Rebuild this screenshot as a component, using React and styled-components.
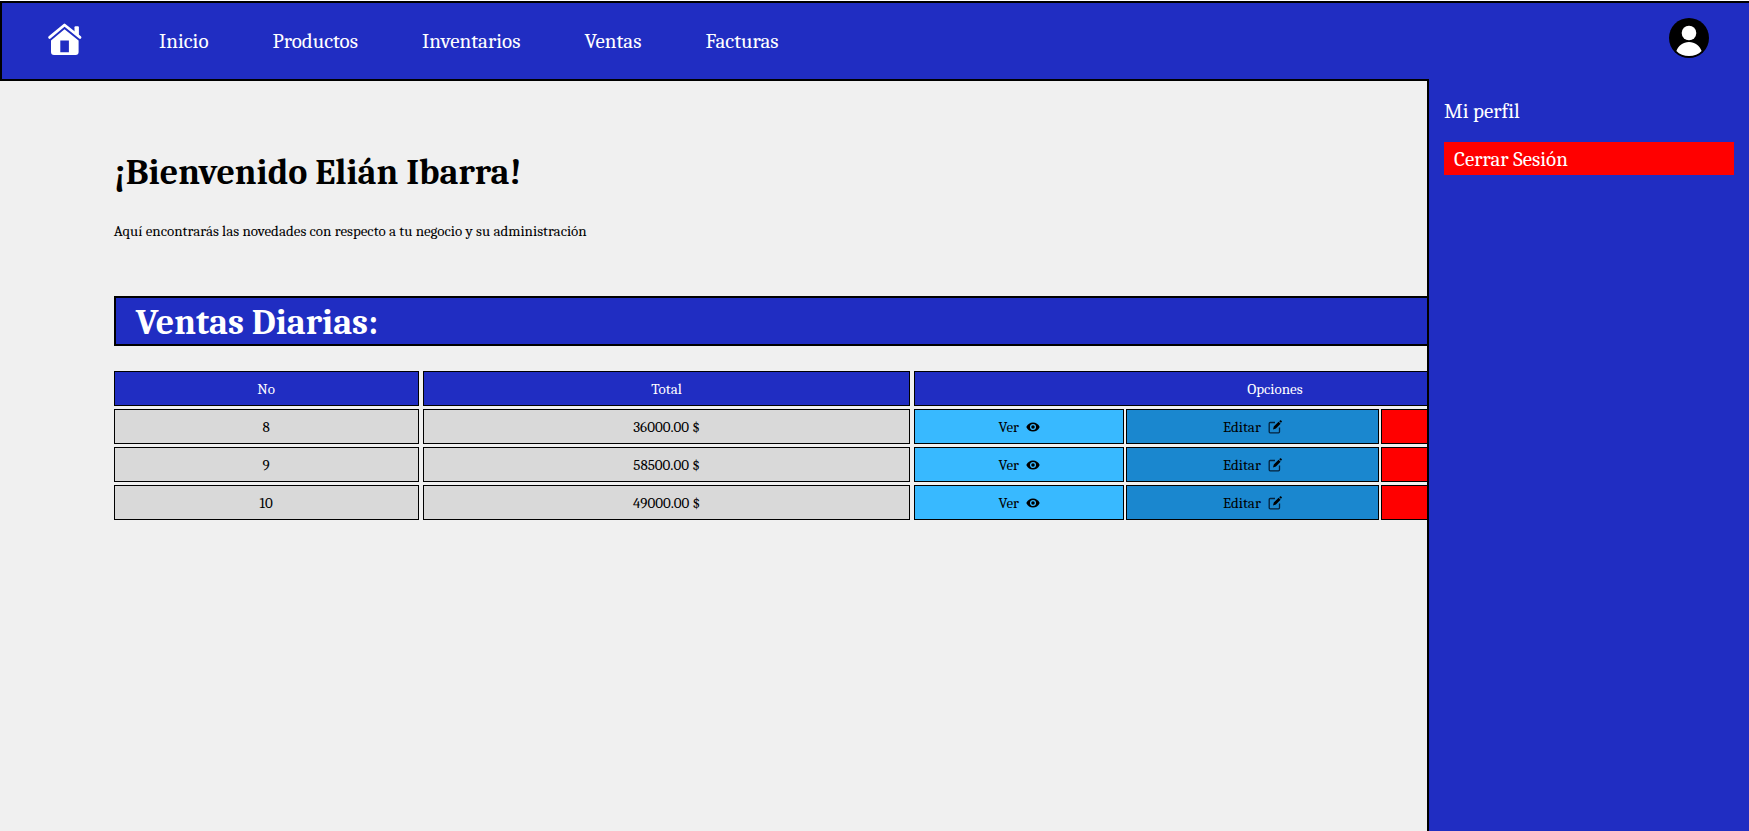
import React from "react";
import styled, { createGlobalStyle } from "styled-components";

const blue = "#202dc2";

const GlobalStyle = createGlobalStyle`
  *, *::before, *::after { box-sizing: border-box; }
  body {
    margin: 0;
    background: #f0f0f0;
    color: #000;
    font-family: Cambria, Caladea, "Liberation Serif", serif;
    font-size: 15px;
    line-height: 20px;
  }
  a { color: inherit; text-decoration: none; }
`;

const Page = styled.div`
  min-height: 100vh;
  border-top: 1px solid #fff;
  overflow-x: clip;
`;

const Header = styled.header`
  display: flex;
  align-items: center;
  height: 80px;
  padding: 0 40px 0 45px;
  background: ${blue};
  border: 2px solid #000;
  border-right: 0;
`;

const HomeLink = styled.a`
  display: flex;
  margin-right: 76px;
  margin-bottom: 4px;
`;

const Nav = styled.nav`
  display: flex;
  gap: 64px;
  flex: 1;
`;

const NavLink = styled.a`
  color: #fff;
  font-size: 21px;
  line-height: 24px;
`;

const AvatarButton = styled.button`
  display: flex;
  padding: 0;
  margin-bottom: 6px;
  border: 0;
  background: none;
  cursor: pointer;
`;

const ProfileMenu = styled.aside`
  position: fixed;
  top: 79px;
  right: 0;
  bottom: 0;
  width: 322px;
  padding: 20px 15px;
  display: flex;
  flex-direction: column;
  gap: 18px;
  background: ${blue};
  border-left: 2px solid #000;
  color: #fff;
  font-size: 21px;
  line-height: 25px;
`;

const LogoutButton = styled.button`
  padding: 5px 10px 3px;
  border: 0;
  background: #f00;
  color: #fff;
  font: inherit;
  text-align: left;
  cursor: pointer;
`;

const Main = styled.main`
  width: 87%;
  margin: 0 auto;
  padding-top: 70px;
`;

const Welcome = styled.h1`
  margin: 0;
  font-size: 36px;
  line-height: 44px;
`;

const Intro = styled.p`
  margin: 26px 0 55px;
`;

const SectionTitle = styled.h2`
  margin: 0 0 25px;
  padding: 4px 20px 0;
  background: ${blue};
  border: 2px solid #000;
  color: #fff;
  font-size: 36px;
  line-height: 42px;
`;

const Table = styled.table`
  display: block;
`;

const Section = styled.tbody`
  display: grid;
  gap: 3px;
`;

const Head = styled(Section).attrs({ as: "thead" })`
  margin-bottom: 3px;
`;

const Row = styled.tr`
  display: grid;
  grid-template-columns: 305fr 488fr 721fr;
  gap: 4px;
`;

const HeadCell = styled.th`
  padding: 7px 8px 6px;
  background: ${blue};
  border: 1px solid #000;
  color: #fff;
  font-weight: 400;
  text-align: center;
`;

const Cell = styled.td`
  padding: 7px 8px 6px;
  background: #d9d9d9;
  border: 1px solid #000;
  text-align: center;
`;

const Options = styled.td`
  display: grid;
  grid-template-columns: 210fr 253fr 255fr;
  gap: 2px;
  padding: 0;
`;

const tones = { view: "#38b9ff", edit: "#1a87cf", remove: "#f00" };

const OptionButton = styled.button`
  display: flex;
  align-items: center;
  justify-content: center;
  gap: 7px;
  padding: 0 8px;
  background: ${({ $tone }) => tones[$tone]};
  border: 1px solid #000;
  color: #000;
  font: inherit;
  cursor: pointer;
`;

const HomeIcon = () => (
  <svg width="36" height="34" viewBox="0 0 36 34" aria-hidden="true">
    <path d="M27.5 12V5.200a1 1 0 0 1 1-1h2.400a1 1 0 0 1 1 1V15z" fill="#fff" />
    <path d="M2.600 15.400 17.500 3 33 15.400" fill="none" stroke="#fff" strokeWidth="2.800" strokeLinecap="round" strokeLinejoin="round" />
    <path fillRule="evenodd" d="M17.500 7.200 31.600 18.600V30q0 3-3 3H7q-3 0-3-3V18.600zM13.300 18.400v11.800h8.600V18.400z" fill="#fff" />
  </svg>
);

const AvatarIcon = () => (
  <svg width="40" height="40" viewBox="0 0 40 40" aria-hidden="true">
    <circle cx="20" cy="20" r="20" fill="#000" />
    <circle cx="20" cy="15" r="7.300" fill="#fff" />
    <path d="M7.400 33C9.500 27.600 14 24 20 24s10.500 3.600 12.600 9c-3 3.500-7.600 5-12.600 5s-9.600-1.500-12.600-5z" fill="#fff" />
  </svg>
);

const EyeIcon = () => (
  <svg width="14" height="14" viewBox="0 0 14 14" aria-hidden="true">
    <path d="M.3 7C1.700 4 4 2.500 7 2.500S12.300 4 13.700 7C12.300 10 10 11.500 7 11.500S1.700 10 .3 7z" fill="#000" />
    <circle cx="7" cy="7" r="2.400" fill="#000" stroke="#38b9ff" strokeWidth="1.300" />
  </svg>
);

const EditIcon = () => (
  <svg width="14" height="14" viewBox="0 0 14 14" aria-hidden="true">
    <path d="M7 2.500H2.200q-1 0-1 1v8.300q0 1 1 1h8.300q1 0 1-1V7.500" fill="none" stroke="#04223c" strokeWidth="1.300" />
    <path d="m5 9.400.8-3L10.600 1.800l2 2L7.900 8.500zM11.200 1.200l1-.9q.5-.3.900.1l.6.6q.4.500 0 .9l-.8.900z" fill="#000" />
  </svg>
);

const links = ["Inicio", "Productos", "Inventarios", "Ventas", "Facturas"];

const sales = [
  { id: 8, total: "36000.00 $" },
  { id: 9, total: "58500.00 $" },
  { id: 10, total: "49000.00 $" },
];

export default function App() {
  return (
    <Page>
      <GlobalStyle />
      <Header>
        <HomeLink href="#inicio" aria-label="Inicio">
          <HomeIcon />
        </HomeLink>
        <Nav>
          {links.map((name) => (
            <NavLink key={name} href={`#${name.toLowerCase()}`}>
              {name}
            </NavLink>
          ))}
        </Nav>
        <AvatarButton type="button" aria-label="Perfil">
          <AvatarIcon />
        </AvatarButton>
      </Header>

      <Main>
        <Welcome>¡Bienvenido Elián Ibarra!</Welcome>
        <Intro>
          Aquí encontrarás las novedades con respecto a tu negocio y su administración
        </Intro>
        <SectionTitle>Ventas Diarias:</SectionTitle>
        <Table>
          <Head>
            <Row>
              <HeadCell scope="col">No</HeadCell>
              <HeadCell scope="col">Total</HeadCell>
              <HeadCell scope="col">Opciones</HeadCell>
            </Row>
          </Head>
          <Section>
            {sales.map(({ id, total }) => (
              <Row key={id}>
                <Cell>{id}</Cell>
                <Cell>{total}</Cell>
                <Options>
                  <OptionButton type="button" $tone="view">
                    Ver <EyeIcon />
                  </OptionButton>
                  <OptionButton type="button" $tone="edit">
                    Editar <EditIcon />
                  </OptionButton>
                  <OptionButton type="button" $tone="remove">
                    Eliminar
                  </OptionButton>
                </Options>
              </Row>
            ))}
          </Section>
        </Table>
      </Main>

      <ProfileMenu>
        <a href="#perfil">Mi perfil</a>
        <LogoutButton type="button">Cerrar Sesión</LogoutButton>
      </ProfileMenu>
    </Page>
  );
}
